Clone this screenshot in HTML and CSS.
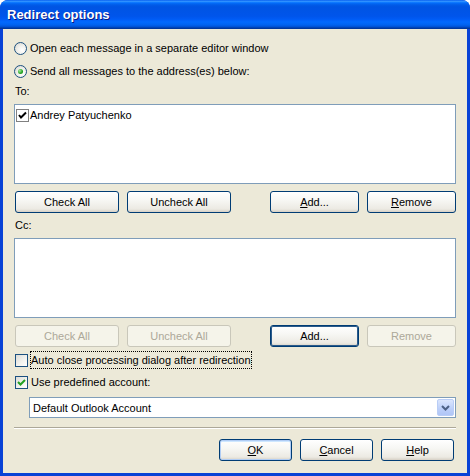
FILE: index.html
```html
<!DOCTYPE html>
<html lang="en">
<head>
  <meta charset="UTF-8">
  <title>Redirect options</title>
  <link rel="stylesheet" href="styles.css">
</head>
<body>
  <div class="window">
    <div class="titlebar">Redirect options</div>
    <div class="client">
      <label class="option first">
        <span class="radio"></span>
        Open each message in a separate editor window
      </label>
      <label class="option">
        <span class="radio checked"></span>
        Send all messages to the address(es) below:
      </label>

      <div class="caption">To:</div>
      <div class="listbox">
        <div class="list-item">
          <span class="list-check">
            <svg width="11" height="11" viewBox="0 0 11 11"><path d="M2 5 L4 7.5 L9 2.5" fill="none" stroke="#000" stroke-width="2"/></svg>
          </span>
          Andrey Patyuchenko
        </div>
      </div>
      <div class="button-row">
        <div class="btn wide">Check All</div>
        <div class="btn wide">Uncheck All</div>
        <div class="spacer"></div>
        <div class="btn mid"><u>A</u>dd...</div>
        <div class="btn mid"><u>R</u>emove</div>
      </div>

      <div class="caption cc">Cc:</div>
      <div class="listbox"></div>
      <div class="button-row">
        <div class="btn wide disabled">Check All</div>
        <div class="btn wide disabled">Uncheck All</div>
        <div class="spacer"></div>
        <div class="btn mid focused">Add...</div>
        <div class="btn mid disabled">Remove</div>
      </div>

      <label class="option check-row">
        <span class="checkbox"></span>
        <span class="focus-rect">Auto close processing dialog after redirection</span>
      </label>
      <label class="option check-row second">
        <span class="checkbox">
          <svg width="11" height="11" viewBox="0 0 11 11"><path d="M2 5 L4.5 7.5 L9 3" fill="none" stroke="#21A121" stroke-width="2"/></svg>
        </span>
        Use predefined account:
      </label>

      <div class="combo">
        <span class="combo-text">Default Outlook Account</span>
        <span class="combo-arrow">
          <svg width="9" height="6" viewBox="0 0 9 6"><path d="M1 1 L4.5 4.5 L8 1" fill="none" stroke="#4D6185" stroke-width="2"/></svg>
        </span>
      </div>

      <div class="separator"></div>

      <div class="button-row footer">
        <div class="btn small default"><u>O</u>K</div>
        <div class="btn small"><u>C</u>ancel</div>
        <div class="btn small"><u>H</u>elp</div>
      </div>
    </div>
  </div>
</body>
</html>
```

FILE: styles.css
```css
body {
  margin: 0;
  background: #fff;
  font-family: "Liberation Sans", Arial, sans-serif;
  font-size: 11px;
  color: #000;
}
.window {
  width: 470px;
  height: 476px;
  box-sizing: border-box;
  display: flex;
  flex-direction: column;
  background: #0842d6;
  border-radius: 8px 8px 0 0;
  overflow: hidden;
}
.titlebar {
  height: 29px;
  flex: none;
  display: flex;
  align-items: center;
  padding-left: 7px;
  color: #fff;
  font-weight: bold;
  font-size: 13px;
  text-shadow: 1px 1px #0a1883;
  background: linear-gradient(#0058ee 0%, #3593ff 4%, #288eff 6%, #127dff 8%, #036ffc 10%, #0262ee 14%, #0057e5 20%, #0054e3 24%, #0055eb 56%, #005bf5 66%, #026afe 76%, #0062ef 86%, #0052d6 92%, #0040ab 96%, #003092 100%);
}
.client {
  flex: 1;
  margin: 0 3px 3px 3px;
  background: #ece9d8;
  padding: 0 11px;
  display: flex;
  flex-direction: column;
}
.option {
  height: 16px;
  display: flex;
  align-items: center;
  gap: 3px;
  margin-top: 7px;
  white-space: nowrap;
}
.option.first {
  margin-top: 11px;
}
.radio {
  width: 11px;
  height: 11px;
  border: 1px solid #1c5180;
  border-radius: 50%;
  background: radial-gradient(circle at 65% 65%, #fff 0%, #f2f2ee 40%, #d5d4cc 100%);
  display: flex;
  align-items: center;
  justify-content: center;
}
.radio.checked::after {
  content: "";
  width: 5px;
  height: 5px;
  border-radius: 50%;
  background: radial-gradient(circle at 35% 35%, #a6eb9a, #21a121 60%, #1b8a1b);
}
.caption {
  height: 13px;
  line-height: 13px;
  padding-left: 1px;
  margin-top: 6px;
}
.listbox {
  height: 80px;
  box-sizing: border-box;
  margin-top: 6px;
  border: 1px solid #7f9db9;
  background: #fff;
  padding: 3px 1px;
}
.list-item {
  display: flex;
  align-items: center;
  gap: 1px;
  height: 14px;
}
.list-check {
  width: 11px;
  height: 11px;
  border: 1px solid #808080;
  background: #fff;
  display: flex;
}
.button-row {
  display: flex;
  gap: 8px;
  margin-top: 7px;
  padding-left: 1px;
}
.spacer {
  flex: 1;
}
.btn {
  height: 22px;
  box-sizing: border-box;
  border: 1px solid #003c74;
  border-radius: 3px;
  background: linear-gradient(#fff 0%, #f7f7f4 40%, #eceae3 85%, #d6d0c5 100%);
  display: flex;
  align-items: center;
  justify-content: center;
  white-space: nowrap;
}
.btn.wide {
  width: 104px;
}
.btn.mid {
  width: 89px;
}
.btn.small {
  width: 73px;
}
.btn.disabled {
  border-color: #c9c7ba;
  background: #f5f4ea;
  color: #aca899;
}
.btn.focused {
  box-shadow: inset 0 0 0 1px #2a5a8a;
}
.btn.default {
  box-shadow: inset 0 0 0 1px #b0ccf4, inset 0 1px 0 1px #cee7ff;
}
.caption.cc {
  margin-top: 6px;
}
.check-row {
  margin-top: 5px;
  padding-left: 1px;
}
.check-row.second {
  margin-top: 6px;
}
.checkbox {
  width: 11px;
  height: 11px;
  border: 1px solid #1c5180;
  background: linear-gradient(135deg, #dcdcd7 0%, #f4f4f0 60%, #fff 100%);
  display: flex;
  flex: none;
}
.focus-rect {
  outline: 1px dotted #000;
  padding: 1px 0;
  line-height: 14px;
}
.combo {
  margin: 7px 0 0 15px;
  height: 21px;
  box-sizing: border-box;
  border: 1px solid #7f9db9;
  background: #fff;
  display: flex;
  align-items: center;
  padding: 1px;
}
.combo-text {
  flex: 1;
  padding-left: 2px;
}
.combo-arrow {
  width: 17px;
  height: 17px;
  box-sizing: border-box;
  border: 1px solid #b9cdf6;
  border-radius: 2px;
  background: linear-gradient(#dbe6fd, #bccff9 60%, #b0c6f6);
  display: flex;
  align-items: center;
  justify-content: center;
}
.separator {
  margin-top: 9px;
  height: 1px;
  background: #aca899;
  border-bottom: 1px solid #fff;
}
.button-row.footer {
  justify-content: flex-end;
  margin-top: 10px;
  padding-right: 2px;
}
```
